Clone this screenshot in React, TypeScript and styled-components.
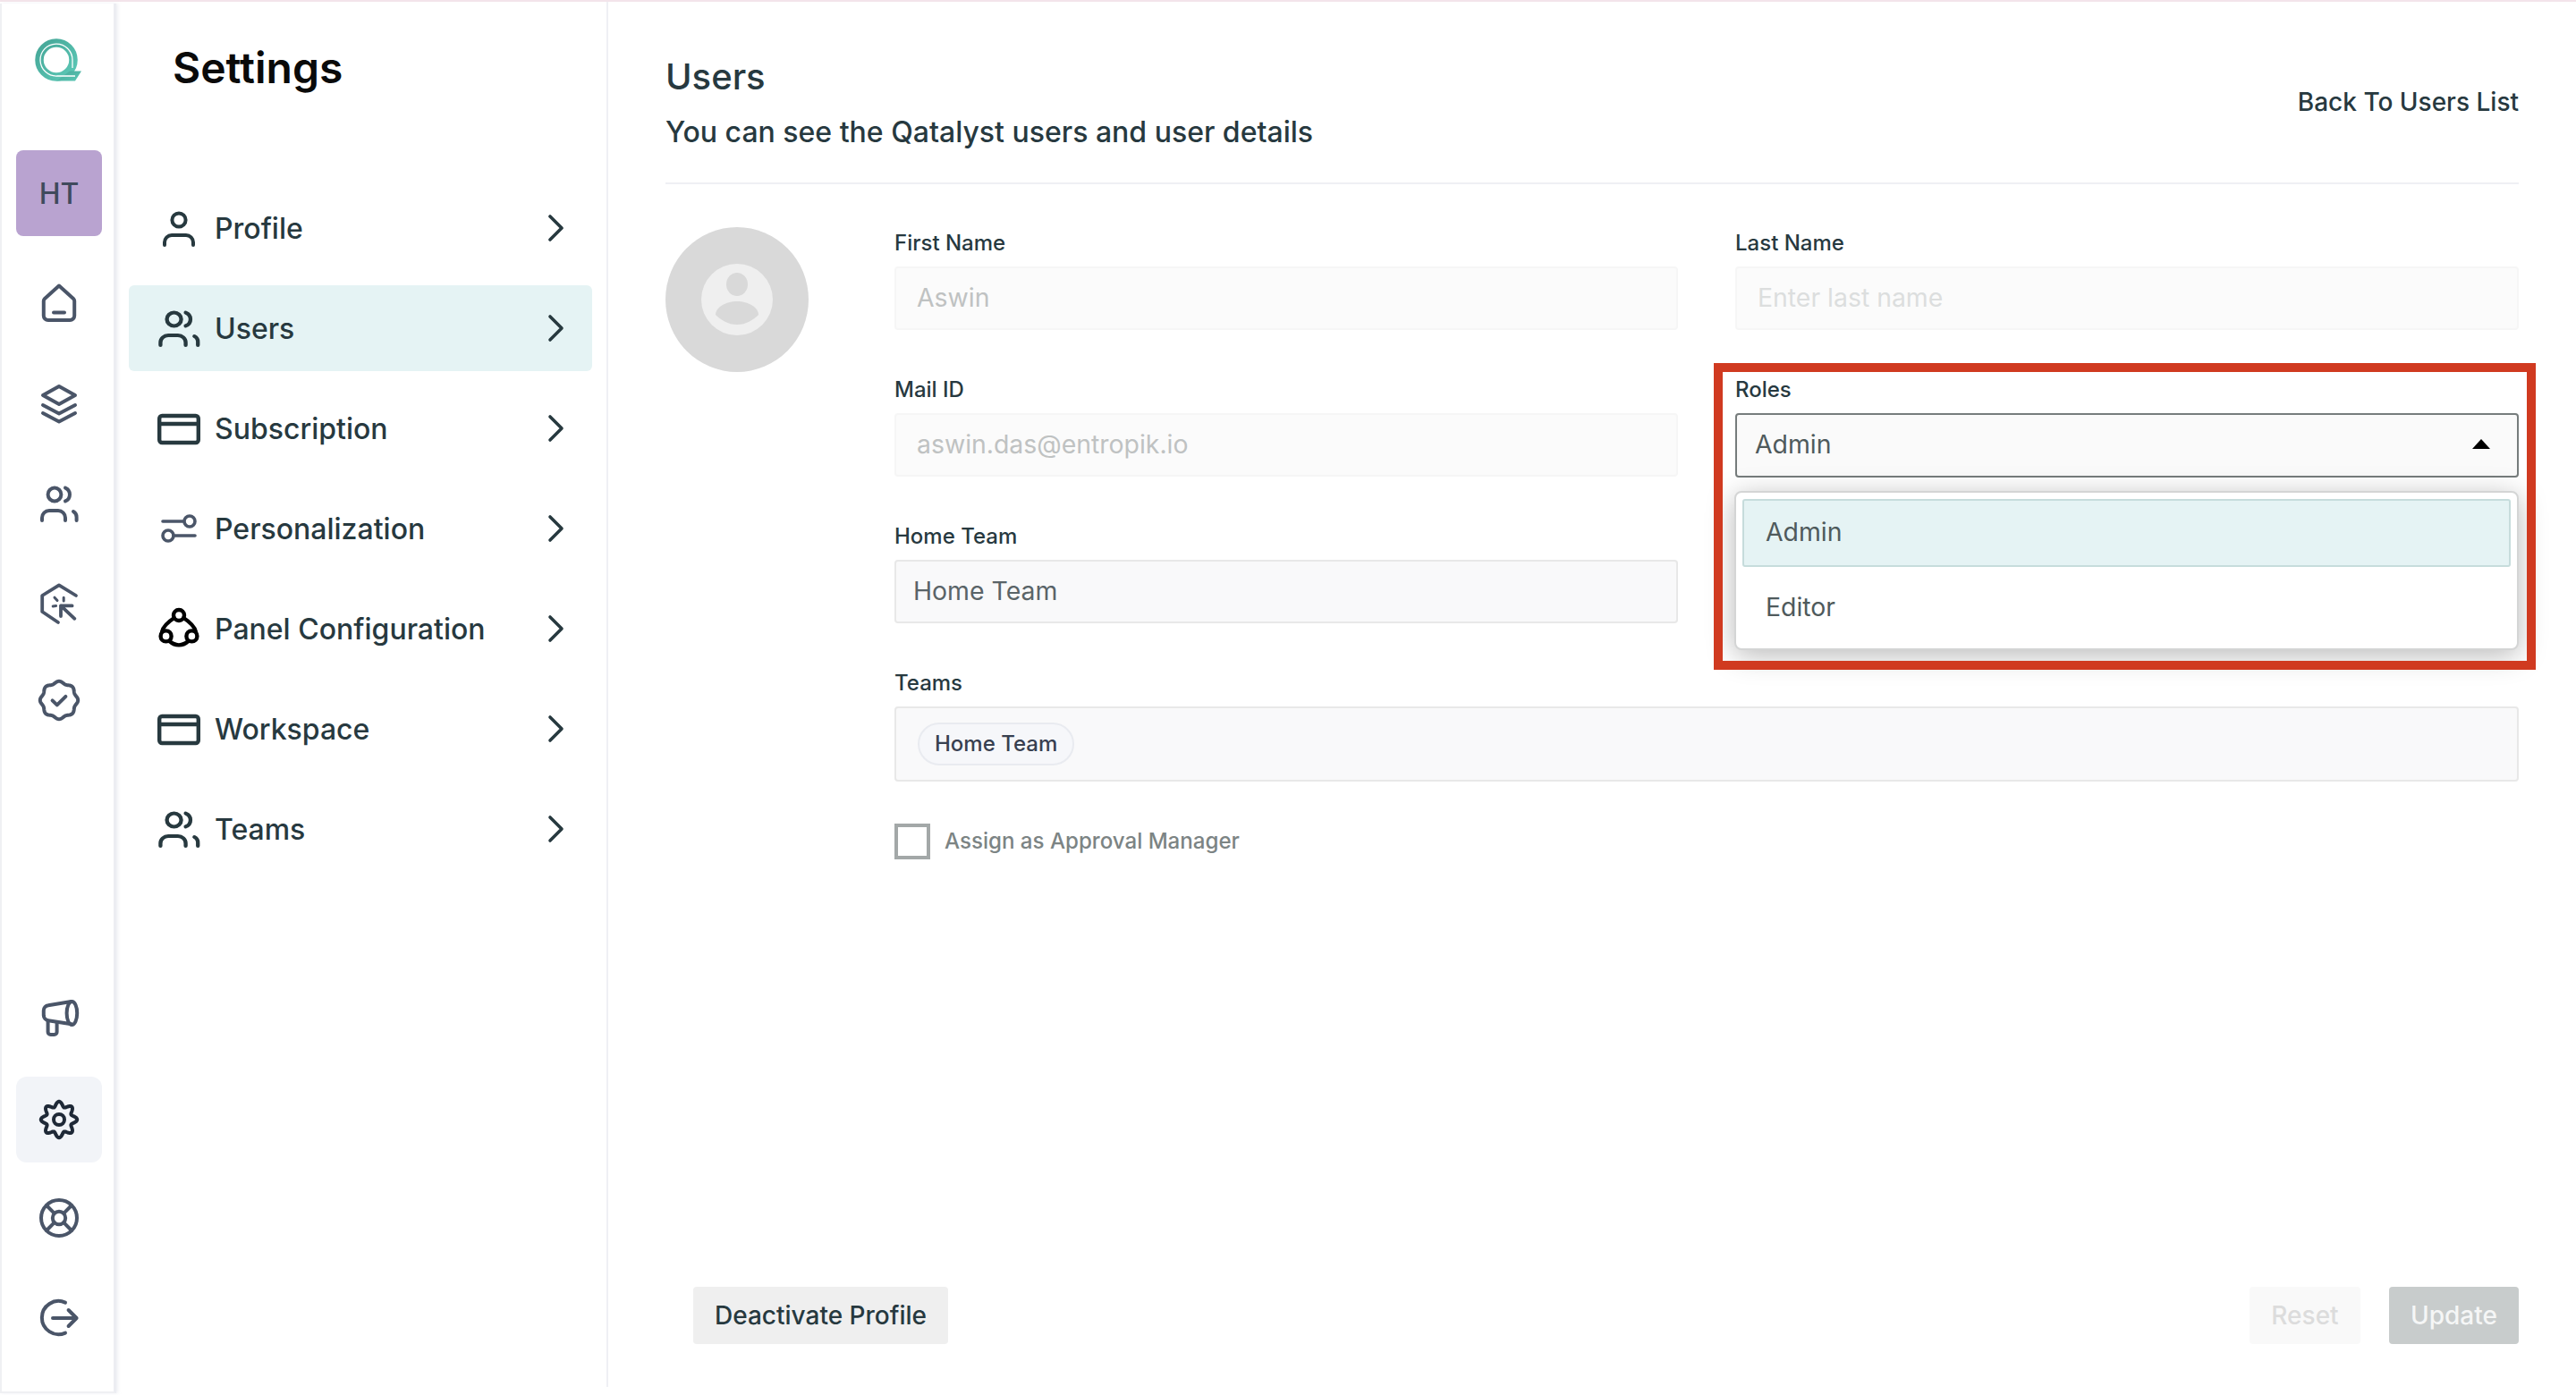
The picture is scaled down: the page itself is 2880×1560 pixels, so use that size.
import React from 'react';
import styled, { createGlobalStyle } from 'styled-components';

const GlobalStyle = createGlobalStyle`
  html, body {
    margin: 0;
    padding: 0;
    background: #fff;
    font-family: Inter, "Liberation Sans", sans-serif;
  }
  * { box-sizing: border-box; }
`;

// scalloped outline used by the gear and the badge
const wavyPath = (r: number, amp: number, n: number) => {
  const pts: string[] = [];
  for (let i = 0; i < 160; i++) {
    const t = (i / 160) * Math.PI * 2;
    const rad = r + amp * Math.cos(n * t);
    pts.push(`${(12 + rad * Math.sin(t)).toFixed(2)} ${(12 - rad * Math.cos(t)).toFixed(2)}`);
  }
  return `M${pts.join('L')}Z`;
};

const Icon = styled.svg.attrs({ viewBox: '0 0 24 24', fill: 'none', strokeLinecap: 'round', strokeLinejoin: 'round' })<{ $color?: string; $w?: number }>`
  width: 48px;
  height: 48px;
  flex: none;
  stroke: ${(p) => p.$color || '#4a5568'};
  stroke-width: ${(p) => p.$w || 2};
`;

// the menu's people icon is drawn a little wider than the rail's
const WideIcon = styled(Icon).attrs({ preserveAspectRatio: 'none' })`
  width: 52px;
  margin: 0 -2px;
`;

const HomeIcon = () => (
  <Icon>
    <path d="M12 2.3l8 7.2c.4.4.6.8.6 1.3V19a2.5 2.5 0 0 1-2.5 2.5H5.900A2.5 2.5 0 0 1 3.400 19v-8.200c0-.5.2-.9.6-1.300z" />
    <path d="M9 17.200h6" />
  </Icon>
);
const LayersIcon = () => (
  <Icon>
    <path d="M12 2.500l9 5-9 5-9-5z" />
    <path d="M3 13l9 4.700 9-4.700" />
    <path d="M3 17.500l9 4.700 9-4.700" />
  </Icon>
);
const usersPaths = (
  <>
    <circle cx="9.500" cy="7" r="3.700" />
    <path d="M15.500 3.300a4 4 0 0 1 0 7.400" />
    <path d="M2.500 21.500V20a4 4 0 0 1 4-4h5a4 4 0 0 1 4 4v1.500" />
    <path d="M20 16.500a3.500 3.500 0 0 1 1.800 3.200v1.800" />
  </>
);
const UsersIcon = () => <Icon>{usersPaths}</Icon>;
const MenuUsersIcon = () => <WideIcon $color="#27393f">{usersPaths}</WideIcon>;
const ClickIcon = () => (
  <Icon $w={1.900}>
    <path d="M21.500 7.500L12 1.700 2.600 7.500v9l8.900 6" />
    <path d="M13 13.200h6.300M13 13.200v5.800M13 13.200l7.700 7.200" />
    <path d="M14.600 8.600v1.900M9.500 8.600l1.500 1.700M8.600 13.500l1.700-.3" strokeWidth="1.500" />
  </Icon>
);
const BadgeIcon = () => (
  <Icon>
    <path d={wavyPath(10, 0.6, 8)} />
    <path d="M8.300 12.200l2.600 2.500 4.800-4.800" />
  </Icon>
);
const MegaphoneIcon = () => (
  <Icon>
    <ellipse cx="19.200" cy="9.500" rx="2.900" ry="6.500" />
    <path d="M18.800 3L6 5.100A3 3 0 0 0 3.400 8v2.700A3 3 0 0 0 6 13.600l13 2" />
    <path d="M5.800 14v6a1.500 1.500 0 0 0 1.500 1.500h2A1.500 1.500 0 0 0 10.800 20v-5" />
  </Icon>
);
const GearIcon = () => (
  <Icon $color="#1f2937">
    <path d={wavyPath(8.700, 1.400, 8)} />
    <circle cx="12" cy="12" r="3" />
  </Icon>
);
const LifebuoyIcon = () => (
  <Icon>
    <circle cx="12" cy="12" r="10" />
    <circle cx="12" cy="12" r="3.600" />
    <path d="M5 5l4.400 4.400M19 5l-4.400 4.400M5 19l4.400-4.400M19 19l-4.400-4.400" />
  </Icon>
);
const LogoutIcon = () => (
  <Icon>
    <path d="M15.500 3.300a9.300 9.300 0 1 0 0 17" />
    <path d="M8.500 12H21.800M17.300 7.500l4.500 4.500-4.500 4.500" />
  </Icon>
);
const ProfileIcon = () => (
  <Icon $color="#27393f">
    <circle cx="12" cy="7.500" r="3.800" />
    <path d="M4 21.500V20a4 4 0 0 1 4-4h8a4 4 0 0 1 4 4v1.500" />
  </Icon>
);
const CardIcon = () => (
  <Icon $color="#27393f" $w={2.200}>
    <rect x="1.100" y="5" width="21.800" height="15" rx="1.500" />
    <path d="M1.100 9.500h21.800" />
  </Icon>
);
const SlidersIcon = () => (
  <Icon $color="#4b5669" $w={1.800}>
    <path d="M3 8h11.500M9 16h12" />
    <circle cx="18" cy="8" r="3" />
    <circle cx="6" cy="16" r="3" />
  </Icon>
);
const PanelIcon = () => (
  <Icon $color="#000" $w={2.200}>
    <circle cx="12" cy="4.500" r="3" />
    <circle cx="4.800" cy="16.200" r="3" />
    <circle cx="19.200" cy="16.200" r="3" />
    <path d="M9.400 6C6.300 8 3.400 10.300 2.600 13.600M14.600 6c3.100 2 6 4.300 6.800 7.600" />
    <path d="M6.800 19c3.200 2.900 7.200 2.900 10.400 0" />
  </Icon>
);

const Logo = () => (
  <LogoSvg viewBox="0 0 54 50" fill="none">
    <defs>
      <linearGradient id="qGrad" x1="0" y1="0" x2="1" y2="1">
        <stop offset="0" stopColor="#46a798" />
        <stop offset="1" stopColor="#5cc8b6" />
      </linearGradient>
    </defs>
    <circle cx="25" cy="24" r="19" stroke="url(#qGrad)" strokeWidth="9.500" />
    <path d="M25 47.500h21l7-11H40z" fill="url(#qGrad)" />
    <path d="M46 42H26A18 18 0 1 1 43 24v9" stroke="#fff" strokeWidth="1.300" />
  </LogoSvg>
);

const LogoSvg = styled.svg`
  width: 54px;
  height: 50px;
  flex: none;
`;

const Page = styled.div`
  width: 2880px;
  height: 1560px;
  display: flex;
  flex-direction: column;
  overflow: hidden;
  background: #fff;
`;

const TopLine = styled.div`
  height: 2px;
  flex: none;
  background: #f3e4ea;
`;

const Body = styled.div`
  flex: 1;
  display: flex;
  min-height: 0;
`;

const Rail = styled.nav`
  width: 130px;
  flex: none;
  margin: 2px 0;
  padding: 39px 0 34px;
  display: flex;
  flex-direction: column;
  border-left: 2px solid #eff0f3;
  border-right: 3px solid #ecedf2;
  border-bottom: 2px solid #eff0f3;
  box-shadow: 2px 0 3px rgba(226, 228, 236, 0.5);
`;

const LogoSlot = styled.div`
  height: 50px;
  margin-bottom: 75px;
  padding-left: 36px;
  display: flex;
`;

const RailGroup = styled.div<{ $push?: boolean }>`
  display: flex;
  flex-direction: column;
  gap: 16px;
  margin-top: ${(p) => (p.$push ? 'auto' : '0')};
`;

const RailItem = styled.div`
  width: 96px;
  height: 96px;
  margin-left: 16px;
  display: flex;
  align-items: center;
  justify-content: center;
  border-radius: 12px;
`;

const RailBadge = styled(RailItem)`
  margin-top: -4px;
`;

const RailActive = styled(RailItem)`
  margin-top: 2px;
  margin-bottom: -2px;
  background: #f2f4f8;
`;

const Avatar = styled(RailItem)`
  margin-bottom: 27px;
  border-radius: 8px;
  background: #b9a3d0;
  color: #3f4a5c;
  font-size: 32px;
  font-weight: 500;
`;

const SidePanel = styled.aside`
  width: 550px;
  flex: none;
  margin-bottom: 9px;
  border-right: 2px solid #eff0f4;
`;

const PanelTitle = styled.h1`
  margin: 0;
  padding: 44px 0 0 63px;
  height: 205px;
  font-size: 48px;
  line-height: 60px;
  font-weight: 600;
  color: #0a0a0a;
`;

const Menu = styled.div`
  display: flex;
  flex-direction: column;
  gap: 16px;
  padding-left: 14px;
`;

const MenuRow = styled.div<{ $active?: boolean }>`
  width: 518px;
  height: 96px;
  padding: 0 30px 0 32px;
  display: flex;
  align-items: center;
  gap: 16px;
  border-radius: 6px;
  background: ${(p) => (p.$active ? '#e5f3f4' : 'transparent')};
  color: #27393f;
  font-size: 32px;
  font-weight: 500;
`;

const MenuLabel = styled.span`
  flex: 1;
`;

const Chevron = styled.svg.attrs({ viewBox: '0 0 20 32', fill: 'none' })`
  width: 20px;
  height: 32px;
  stroke: #27393f;
  stroke-width: 3.600;
  stroke-linecap: round;
  stroke-linejoin: round;
`;

const Main = styled.main`
  flex: 1;
  min-width: 0;
  padding: 0 64px 57px;
  display: flex;
  flex-direction: column;
`;

const Header = styled.header`
  height: 204px;
  flex: none;
  display: flex;
  justify-content: space-between;
  align-items: flex-start;
  border-bottom: 2px solid #eff0f4;
`;

const PageTitle = styled.h2`
  margin: 60px 0 0;
  font-size: 40px;
  line-height: 48px;
  font-weight: 500;
  color: #27393f;
`;

const PageSub = styled.p`
  margin: 18px 0 0;
  font-size: 32px;
  line-height: 40px;
  font-weight: 500;
  color: #27393f;
`;

const BackLink = styled.a`
  margin-top: 92px;
  font-size: 28px;
  line-height: 40px;
  font-weight: 500;
  color: #27393f;
`;

const FormRow = styled.div`
  display: flex;
  gap: 96px;
  padding-top: 48px;
`;

const Photo = styled.svg`
  width: 160px;
  height: 162px;
  flex: none;
`;

const FormCol = styled.div`
  flex: 1;
  min-width: 0;
  padding-top: 4px;
`;

const Grid = styled.div`
  display: grid;
  grid-template-columns: 1fr 1fr;
  column-gap: 64px;
  row-gap: 52.500px;
`;

const Field = styled.div<{ $wide?: boolean }>`
  position: relative;
  grid-column: ${(p) => (p.$wide ? '1 / -1' : 'auto')};
`;

const Label = styled.div`
  height: 28px;
  margin-bottom: 12px;
  font-size: 24px;
  line-height: 28px;
  font-weight: 500;
  color: #27393f;
`;

const Input = styled.div<{ $disabled?: boolean }>`
  height: 71px;
  padding: 0 ${(p) => (p.$disabled ? '23px' : '19px')} 2px;
  display: flex;
  align-items: center;
  border: 2px solid ${(p) => (p.$disabled ? '#f6f6f6' : '#e8e8e8')};
  border-radius: 4px;
  background: ${(p) => (p.$disabled ? '#fbfbfb' : '#f9f9fa')};
  color: ${(p) => (p.$disabled ? '#bfc2c2' : '#5a6468')};
  font-size: 28.400px;
`;

const Placeholder = styled.span`
  color: #dcdede;
`;

const SelectBox = styled(Input)`
  justify-content: space-between;
  padding-left: 20px;
  padding-right: 30px;
  height: 72px;
  border-color: #767c7c;
  background: #fafafa;
  color: #4f5a5c;
`;

const Caret = styled.span`
  width: 0;
  height: 0;
  border-left: 10px solid transparent;
  border-right: 10px solid transparent;
  border-bottom: 11px solid #000;
`;

const Dropdown = styled.div`
  position: absolute;
  top: 127px;
  left: -1px;
  right: 0;
  height: 178px;
  padding: 7px 7px;
  z-index: 2;
  background: #fff;
  border: 2px solid #d4d5d5;
  border-radius: 8px;
  box-shadow: 0 6px 32px rgba(0, 0, 0, 0.28);
`;

const Option = styled.div<{ $selected?: boolean }>`
  height: 76px;
  margin-bottom: ${(p) => (p.$selected ? '8px' : '0')};
  padding: 0 0 2px 24px;
  display: flex;
  align-items: center;
  border: 2px solid ${(p) => (p.$selected ? '#c6dcdc' : 'transparent')};
  border-radius: 3px;
  background: ${(p) => (p.$selected ? '#e5f3f4' : 'transparent')};
  color: #4f5a5c;
  font-size: 28.400px;
`;

// the red annotation box sits on top of the select
const Highlight = styled.div`
  position: absolute;
  top: -16px;
  left: -24px;
  right: -19px;
  height: 343px;
  z-index: 3;
  border: 10px solid #d03a20;
  pointer-events: none;
`;

const TagsInput = styled(Input)`
  height: 84px;
  padding: 0 24px;
`;

const Chip = styled.span`
  height: 48px;
  padding: 0 17px;
  display: inline-flex;
  align-items: center;
  border: 2px solid #e9ebf0;
  border-radius: 24px;
  background: #f6f7fa;
  color: #384050;
  font-size: 24px;
  font-weight: 500;
`;

const CheckRow = styled.label`
  margin-top: 47px;
  display: flex;
  align-items: center;
  gap: 16px;
  color: #7c8484;
  font-size: 24.100px;
  font-weight: 500;
`;

const CheckBox = styled.span`
  width: 40px;
  height: 40px;
  border: 4px solid #a3a8a8;
  background: #fff;
`;

const Footer = styled.footer`
  margin-top: auto;
  padding-left: 31px;
  display: flex;
  align-items: center;
  gap: 32px;
`;

const Button = styled.button<{ $bg: string; $fg: string; $w: number }>`
  width: ${(p) => p.$w}px;
  height: 64px;
  padding: 0;
  border: 0;
  border-radius: 4px;
  background: ${(p) => p.$bg};
  color: ${(p) => p.$fg};
  font-family: inherit;
  font-size: 28px;
  font-weight: 500;
`;

const FooterSpacer = styled.div`
  flex: 1;
`;

const menu = [
  { label: 'Profile', icon: <ProfileIcon /> },
  { label: 'Users', icon: <MenuUsersIcon />, active: true },
  { label: 'Subscription', icon: <CardIcon /> },
  { label: 'Personalization', icon: <SlidersIcon /> },
  { label: 'Panel Configuration', icon: <PanelIcon /> },
  { label: 'Workspace', icon: <CardIcon /> },
  { label: 'Teams', icon: <MenuUsersIcon /> },
];

export default function App() {
  return (
    <Page>
      <GlobalStyle />
      <TopLine />
      <Body>
        <Rail>
          <LogoSlot>
            <Logo />
          </LogoSlot>
          <RailGroup>
            <Avatar>HT</Avatar>
          </RailGroup>
          <RailGroup>
            <RailItem><HomeIcon /></RailItem>
            <RailItem><LayersIcon /></RailItem>
            <RailItem><UsersIcon /></RailItem>
            <RailItem><ClickIcon /></RailItem>
            <RailBadge><BadgeIcon /></RailBadge>
          </RailGroup>
          <RailGroup $push>
            <RailItem><MegaphoneIcon /></RailItem>
            <RailActive><GearIcon /></RailActive>
            <RailItem><LifebuoyIcon /></RailItem>
            <RailItem><LogoutIcon /></RailItem>
          </RailGroup>
        </Rail>

        <SidePanel>
          <PanelTitle>Settings</PanelTitle>
          <Menu>
            {menu.map((m) => (
              <MenuRow key={m.label} $active={m.active}>
                {m.icon}
                <MenuLabel>{m.label}</MenuLabel>
                <Chevron><path d="M3 3l13 13L3 29" /></Chevron>
              </MenuRow>
            ))}
          </Menu>
        </SidePanel>

        <Main>
          <Header>
            <div>
              <PageTitle>Users</PageTitle>
              <PageSub>You can see the Qatalyst users and user details</PageSub>
            </div>
            <BackLink>Back To Users List</BackLink>
          </Header>

          <FormRow>
            <Photo viewBox="0 0 160 162">
              <ellipse cx="80" cy="81" rx="80" ry="81" fill="#d9d9d9" />
              <circle cx="80" cy="81" r="40" fill="#efefef" />
              <ellipse cx="80" cy="64" rx="12" ry="13" fill="#d9d9d9" />
              <path d="M56 98c0-8 11-15 24-15s24 7 24 15c-6 6-14 11-24 11s-18-5-24-11z" fill="#d9d9d9" />
            </Photo>
            <FormCol>
              <Grid>
                <Field>
                  <Label>First Name</Label>
                  <Input $disabled>Aswin</Input>
                </Field>
                <Field>
                  <Label>Last Name</Label>
                  <Input $disabled><Placeholder>Enter last name</Placeholder></Input>
                </Field>
                <Field>
                  <Label>Mail ID</Label>
                  <Input $disabled>aswin.das@entropik.io</Input>
                </Field>
                <Field>
                  <Label>Roles</Label>
                  <SelectBox>Admin<Caret /></SelectBox>
                  <Dropdown>
                    <Option $selected>Admin</Option>
                    <Option>Editor</Option>
                  </Dropdown>
                  <Highlight />
                </Field>
                <Field>
                  <Label>Home Team</Label>
                  <Input>Home Team</Input>
                </Field>
                <Field $wide>
                  <Label>Teams</Label>
                  <TagsInput><Chip>Home Team</Chip></TagsInput>
                </Field>
              </Grid>
              <CheckRow><CheckBox />Assign as Approval Manager</CheckRow>
            </FormCol>
          </FormRow>

          <Footer>
            <Button $bg="#efefef" $fg="#27393f" $w={285}>Deactivate Profile</Button>
            <FooterSpacer />
            <Button $bg="#f9f9f9" $fg="#dcdcdc" $w={124}>Reset</Button>
            <Button $bg="#c8cccc" $fg="#f5f6f6" $w={145}>Update</Button>
          </Footer>
        </Main>
      </Body>
    </Page>
  );
}
